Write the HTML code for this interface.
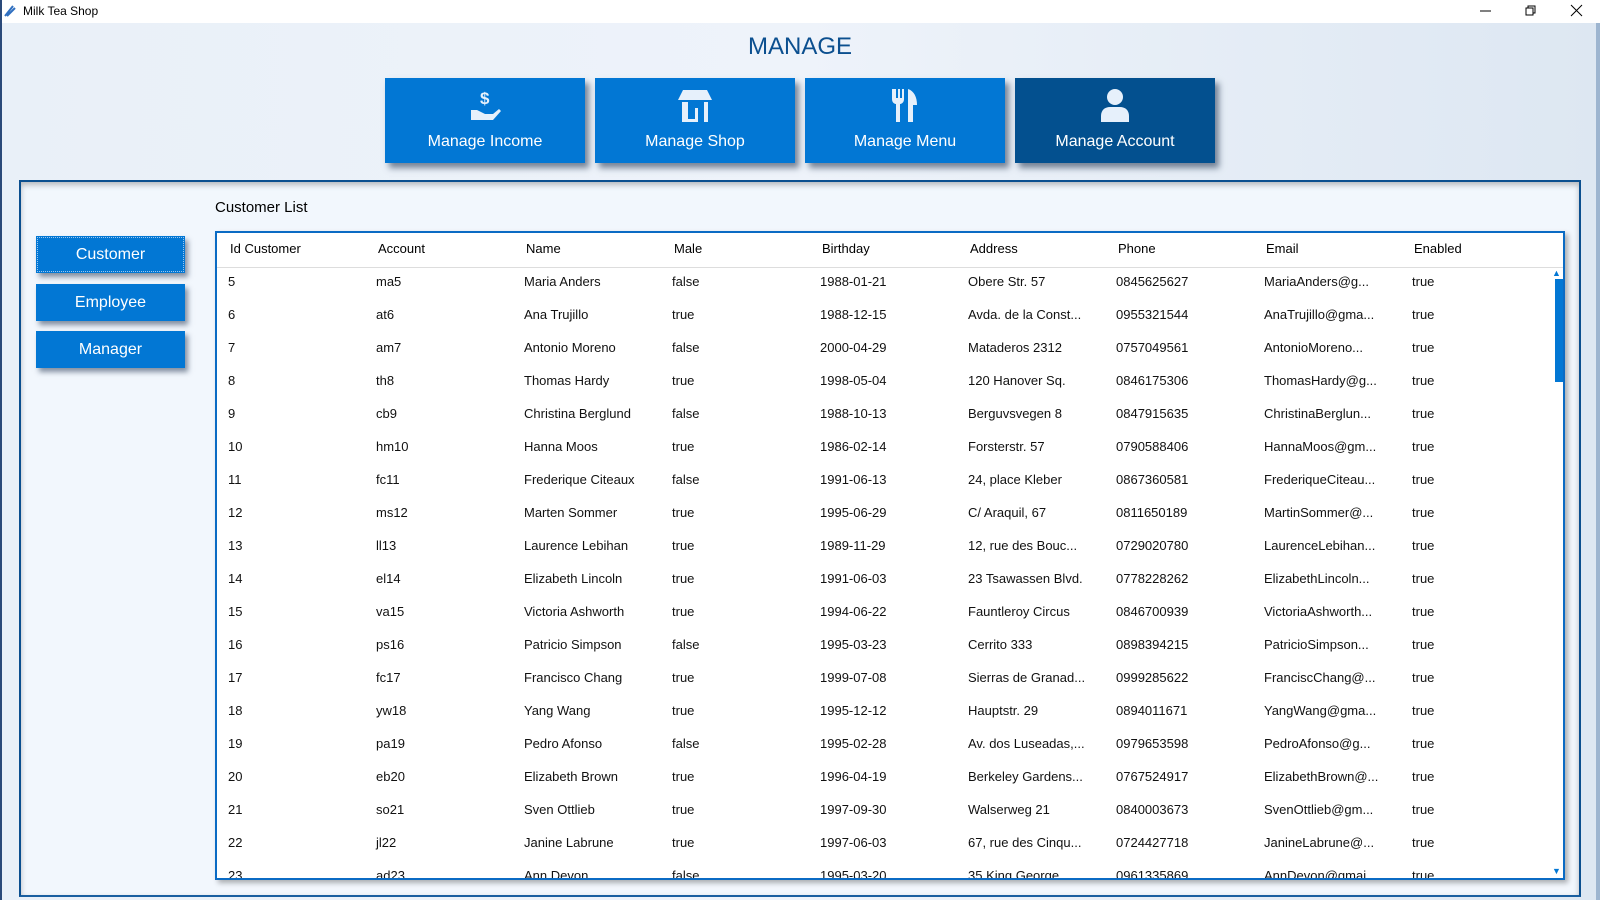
<!DOCTYPE html>
<html><head><meta charset="utf-8"><style>
*{margin:0;padding:0;box-sizing:border-box}
body{width:1600px;height:900px;overflow:hidden;font-family:"Liberation Sans",sans-serif;background:#fff;position:relative}
.titlebar{position:absolute;left:0;top:0;width:1600px;height:23px;background:#fff;font-size:12px;color:#000}
.bg{position:absolute;left:2px;top:23px;width:1595px;height:877px;background:linear-gradient(90deg,#e9f0f8 0%,#eef3fa 50%,#dde7f2 100%)}
.lborder{position:absolute;left:0;top:0;width:2px;height:900px;background:#2b4a7a}
.rborder{position:absolute;right:0;top:23px;width:4px;height:877px;background:#9db5d0}
h1{position:absolute;left:0;width:1600px;top:33px;text-align:center;font-size:24px;font-weight:normal;color:#0b4f8f}
.btn{position:absolute;top:78px;width:200px;height:85px;background:#0277d4;color:#fff;font-size:16px;text-align:center;box-shadow:4px 5px 6px rgba(20,40,70,.55)}
.btn span{position:absolute;left:0;right:0;top:55px}
.btn svg{position:absolute;left:80px;top:8px}
.panel{position:absolute;left:19px;top:180px;width:1562px;height:717px;background:#f2f7fd;border:2px solid #0b4f8f;border-bottom:2px solid #1a5fa0;box-shadow:inset 0 3px 6px rgba(0,0,0,.25)}
.cl{position:absolute;left:215px;top:199px;font-size:15px;color:#000}
.side{position:absolute;left:36px;width:149px;height:37px;background:#0277d4;color:#fff;font-size:16px;text-align:center;line-height:37px;box-shadow:3px 4px 5px rgba(20,40,70,.5)}
.table{position:absolute;left:215px;top:231px;width:1350px;height:649px;background:#fff;border:2px solid #0b6bc4;overflow:hidden;box-shadow:3px 3px 5px rgba(0,0,0,.3)}
.hdr{position:absolute;left:0;top:0;width:100%;height:35px;border-bottom:1px solid #ddd}
.c{position:absolute;font-size:13px;color:#111;white-space:nowrap}
.hdr .c{top:8px;color:#000}
.sb{position:absolute;left:1338px;top:46px;width:8px;height:103px;background:#0277d4}
</style></head><body>
<div class="titlebar">
<svg style="position:absolute;left:3px;top:4px" width="14" height="14"><path d="M2 12 L10 2 M4 12 L12 4" stroke="#2f6fc0" stroke-width="2"/></svg>
<span style="position:absolute;left:23px;top:4px">Milk Tea Shop</span>
<svg style="position:absolute;left:1478px;top:4px" width="120" height="16"><path d="M2 7h11" stroke="#000"/><path d="M48 4h7v7h-7zM50 4v-2h7v7h-2" stroke="#000" fill="none"/><path d="M93 1l11 11M104 1l-11 11" stroke="#000"/></svg>
</div>
<div class="bg"></div>
<div class="lborder"></div><div class="rborder"></div>
<h1>MANAGE</h1>
<div class="btn" style="left:385px"><svg width="40" height="40" viewBox="0 0 40 40"><text x="15" y="18" fill="#e6f0fb" font-size="17" font-weight="bold" font-family="Liberation Sans">$</text><path d="M6 24h6l8 4h8l6-5 2 2-8 9H6z" fill="#e6f0fb"/></svg><span>Manage Income</span></div>
<div class="btn" style="left:595px"><svg width="40" height="40" viewBox="0 0 40 40"><path d="M8 4h24l5 10H3z" fill="#e6f0fb"/><path d="M7 16v20h16V22h-3v11h-7V16zM29 16h4v20h-4z" fill="#e6f0fb"/></svg><span>Manage Shop</span></div>
<div class="btn" style="left:805px"><svg width="40" height="40" viewBox="0 0 40 40"><path d="M7 3v10c0 4 3 5 4 5v18h4V18c1 0 4-1 4-5V3h-2v9h-2V3h-2v9h-2V3z" fill="#e6f0fb"/><path d="M23 36V3c6 2 9 8 9 16h-4v17z" fill="#e6f0fb"/></svg><span>Manage Menu</span></div>
<div class="btn" style="left:1015px;background:#03508f"><svg width="40" height="40" viewBox="0 0 40 40"><circle cx="20" cy="11" r="8" fill="#e6f0fb"/><path d="M6 36v-6c0-6 4-9 9-9h10c5 0 9 3 9 9v6z" fill="#e6f0fb"/></svg><span>Manage Account</span></div>
<div class="panel"></div>
<div class="cl">Customer List</div>
<div class="side" style="top:236px;outline:1px dotted #9cc7f0;outline-offset:-2px">Customer</div>
<div class="side" style="top:284px">Employee</div>
<div class="side" style="top:331px">Manager</div>
<div class="table">
<div class="hdr">
<div class="c" style="left:13px">Id Customer</div><div class="c" style="left:161px">Account</div><div class="c" style="left:309px">Name</div><div class="c" style="left:457px">Male</div><div class="c" style="left:605px">Birthday</div><div class="c" style="left:753px">Address</div><div class="c" style="left:901px">Phone</div><div class="c" style="left:1049px">Email</div><div class="c" style="left:1197px">Enabled</div>
</div>
<div id="rows"></div>
<div style="position:absolute;left:1335px;top:35px;font-size:9px;color:#0277d4">▲</div>
<div class="sb"></div>
<div style="position:absolute;left:1335px;top:633px;font-size:9px;color:#0277d4">▼</div>
</div>
<script>
var d=[["5","ma5","Maria Anders","false","1988-01-21","Obere Str. 57","0845625627","MariaAnders@g..."],
["6","at6","Ana Trujillo","true","1988-12-15","Avda. de la Const...","0955321544","AnaTrujillo@gma..."],
["7","am7","Antonio Moreno","false","2000-04-29","Mataderos  2312","0757049561","AntonioMoreno..."],
["8","th8","Thomas Hardy","true","1998-05-04","120 Hanover Sq.","0846175306","ThomasHardy@g..."],
["9","cb9","Christina Berglund","false","1988-10-13","Berguvsvegen  8","0847915635","ChristinaBerglun..."],
["10","hm10","Hanna Moos","true","1986-02-14","Forsterstr. 57","0790588406","HannaMoos@gm..."],
["11","fc11","Frederique Citeaux","false","1991-06-13","24, place Kleber","0867360581","FrederiqueCiteau..."],
["12","ms12","Marten Sommer","true","1995-06-29","C/ Araquil, 67","0811650189","MartinSommer@..."],
["13","ll13","Laurence Lebihan","true","1989-11-29","12, rue des Bouc...","0729020780","LaurenceLebihan..."],
["14","el14","Elizabeth Lincoln","true","1991-06-03","23 Tsawassen Blvd.","0778228262","ElizabethLincoln..."],
["15","va15","Victoria Ashworth","true","1994-06-22","Fauntleroy Circus","0846700939","VictoriaAshworth..."],
["16","ps16","Patricio Simpson","false","1995-03-23","Cerrito 333","0898394215","PatricioSimpson..."],
["17","fc17","Francisco Chang","true","1999-07-08","Sierras de Granad...","0999285622","FranciscChang@..."],
["18","yw18","Yang Wang","true","1995-12-12","Hauptstr. 29","0894011671","YangWang@gma..."],
["19","pa19","Pedro Afonso","false","1995-02-28","Av. dos Luseadas,...","0979653598","PedroAfonso@g..."],
["20","eb20","Elizabeth Brown","true","1996-04-19","Berkeley Gardens...","0767524917","ElizabethBrown@..."],
["21","so21","Sven Ottlieb","true","1997-09-30","Walserweg 21","0840003673","SvenOttlieb@gm..."],
["22","jl22","Janine Labrune","true","1997-06-03","67, rue des Cinqu...","0724427718","JanineLabrune@..."],
["23","ad23","Ann Devon","false","1995-03-20","35 King George","0961335869","AnnDevon@gmai..."]];
var xs=[11,159,307,455,603,751,899,1047,1195],h="";
d.forEach(function(r,i){r.push("true");var y=41+i*33;r.forEach(function(v,j){h+='<div class="c" style="left:'+xs[j]+'px;top:'+y+'px">'+v+'</div>';});});
document.getElementById("rows").innerHTML=h;
</script>
</body></html>
